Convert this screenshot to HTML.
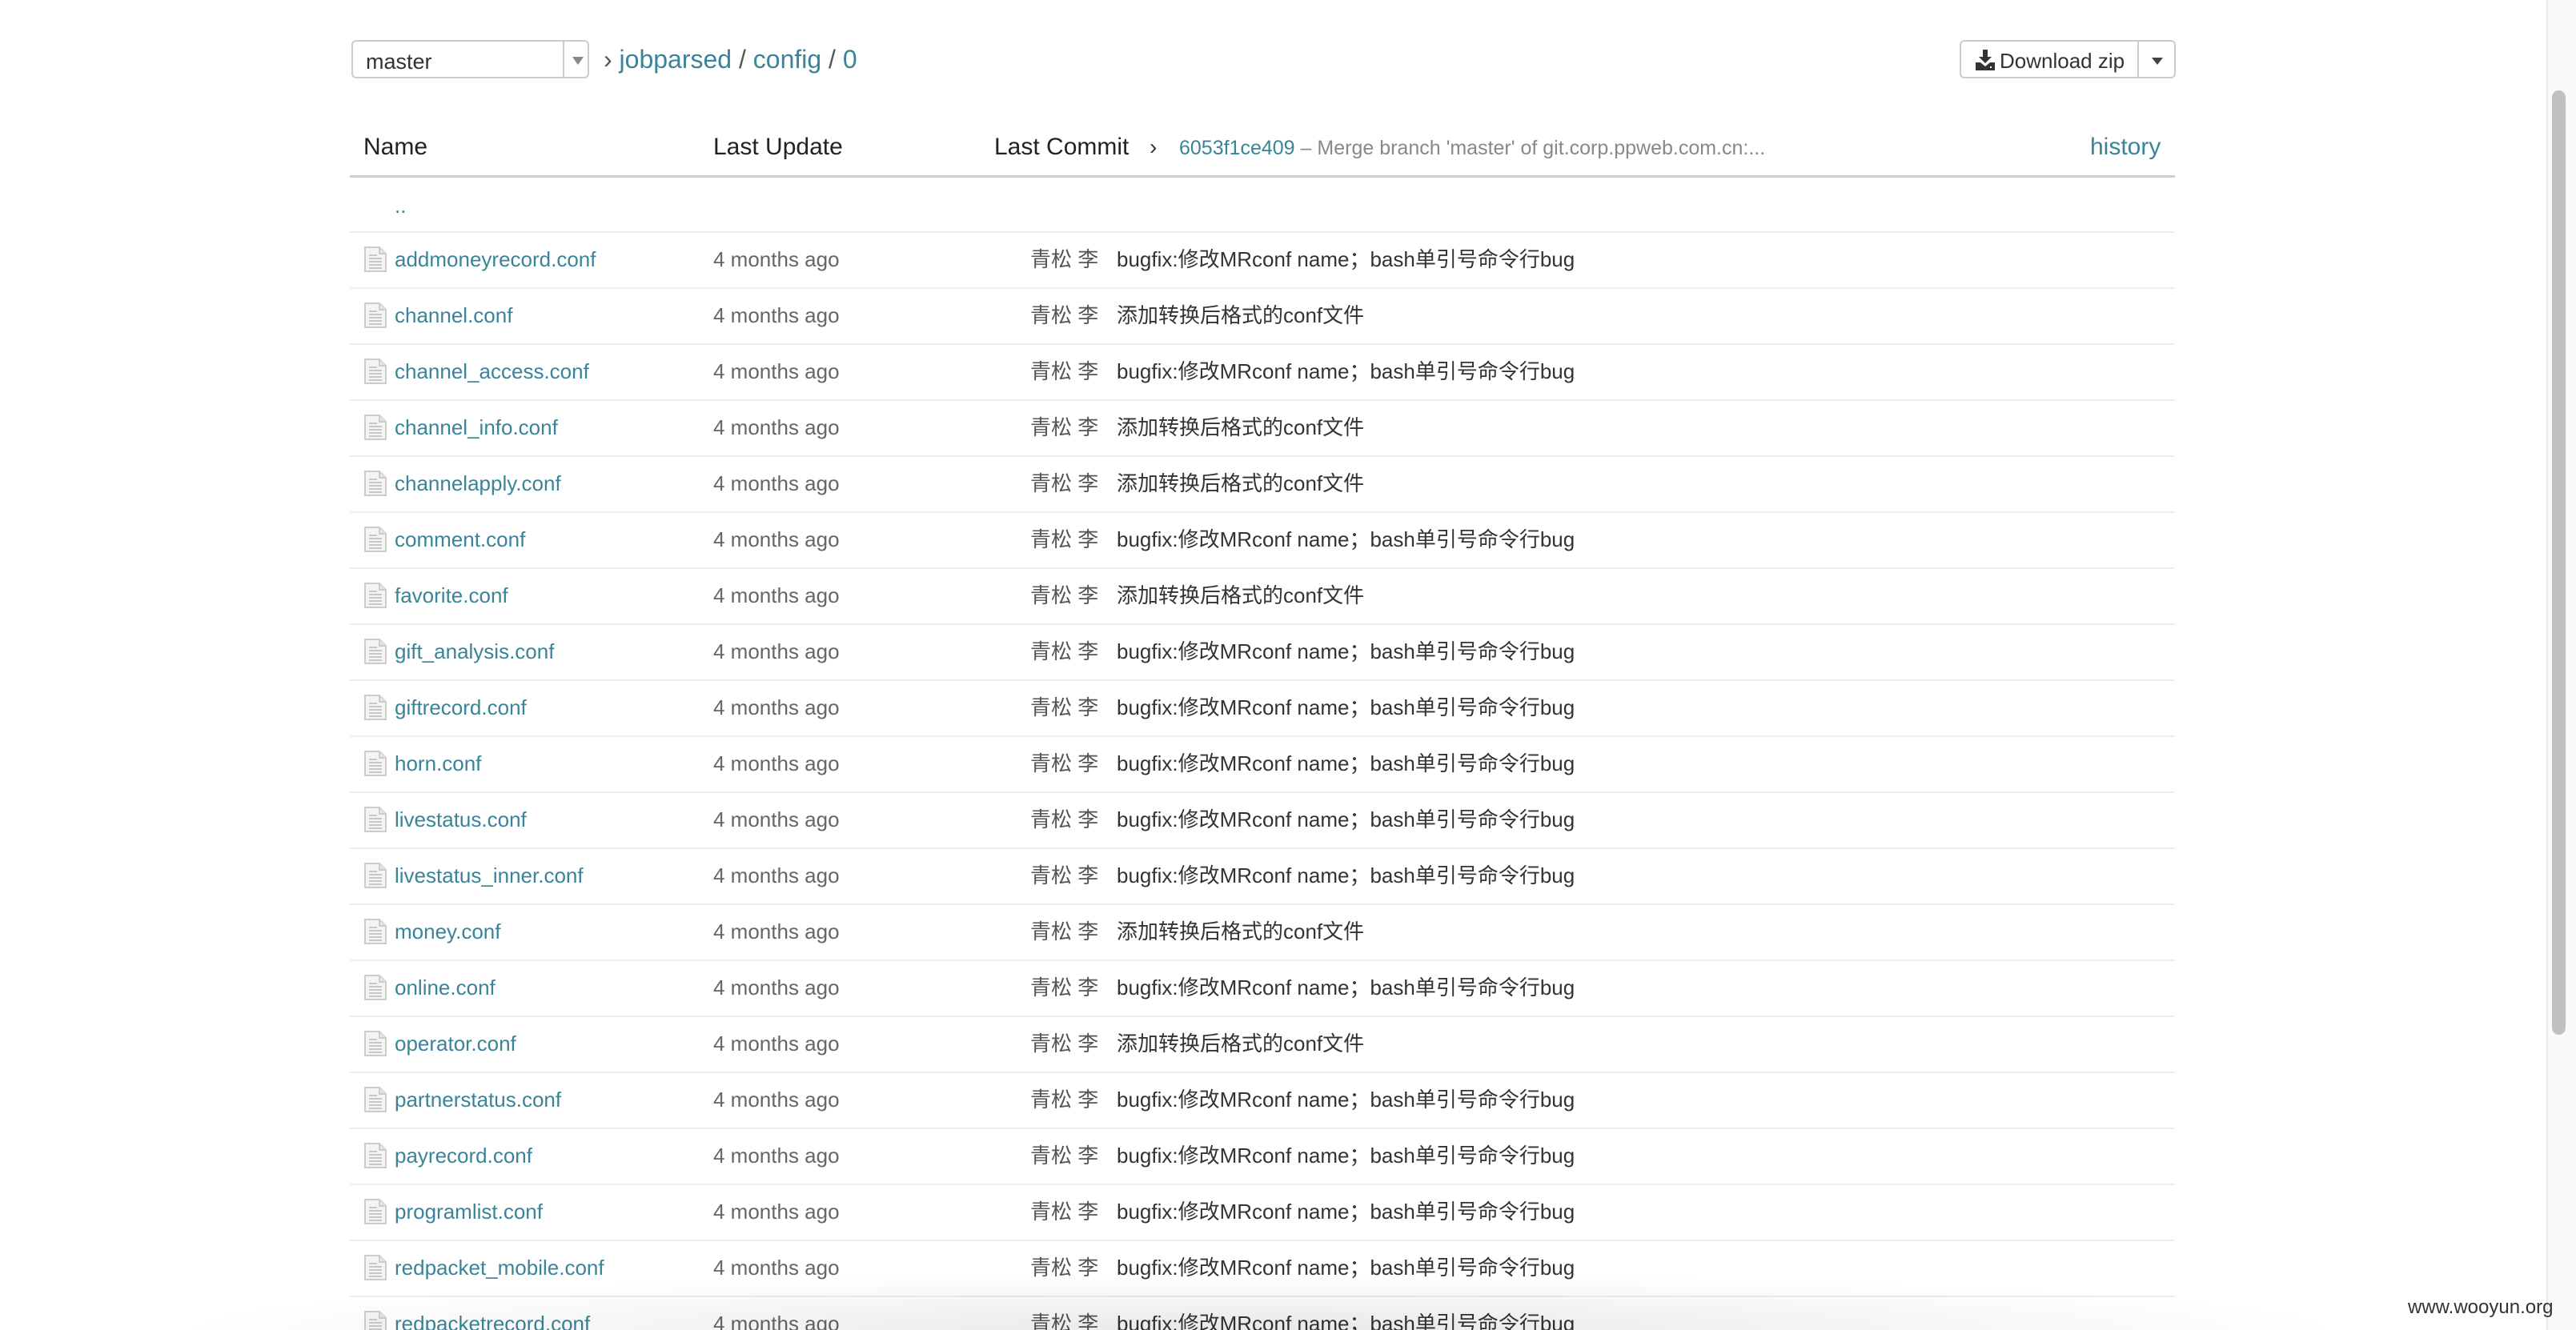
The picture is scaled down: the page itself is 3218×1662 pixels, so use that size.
<!DOCTYPE html>
<html><head><meta charset="utf-8">
<style>
html,body{margin:0;padding:0;background:#fff;width:3218px;height:1662px;overflow:hidden;position:relative;font-family:"Liberation Sans","Noto Sans CJK SC",sans-serif;}
.a{position:absolute;white-space:nowrap;}
.link{color:#3a8398;}
.sel{left:439px;top:50px;width:297px;height:48px;border:2px solid #ccc;border-radius:6px;box-sizing:border-box;}
.sel .t{position:absolute;left:16px;top:10px;font-size:27px;color:#333;}
.sel .d{position:absolute;left:262px;top:0;bottom:0;border-left:2px solid #ccc;width:33px;}
.sel .d:after{content:"";position:absolute;left:10px;top:19px;border-left:7px solid transparent;border-right:7px solid transparent;border-top:10px solid #888;}
.bc{left:754px;top:56px;font-size:32px;color:#555;}
.btn{left:2448px;top:50px;width:270px;height:48px;border:2px solid #ccc;border-radius:6px;box-sizing:border-box;}
.btn .t{position:absolute;left:48px;top:9px;font-size:26px;color:#333;}
.btn .d{position:absolute;left:220px;top:0;bottom:0;border-left:2px solid #ccc;width:48px;}
.btn .d:after{content:"";position:absolute;left:16px;top:20px;border-left:7px solid transparent;border-right:7px solid transparent;border-top:9px solid #444;}
.hd{top:167px;font-size:30px;color:#222;}
.hr{left:437px;width:2280px;height:3px;background:#ccc;top:219px;}
.rl{position:absolute;left:437px;width:2280px;height:2px;background:#eee;}
.row{position:absolute;left:0;width:3218px;height:70px;font-size:26px;}
.row span{position:absolute;top:22px;line-height:1;white-space:nowrap;}
.n{left:493px;color:#3a8398;}
.u{left:891px;color:#666;}
.au{left:1287px;color:#555;}
.m{left:1395px;color:#333;}
.ic{position:absolute;left:455px;top:19px;}
</style></head><body>
<div class="a sel"><span class="t">master</span><span class="d"></span></div>
<div class="a bc">› <span class="link">jobparsed</span> / <span class="link">config</span> / <span class="link">0</span></div>
<div class="a btn">
<svg style="position:absolute;left:18px;top:10px" width="24" height="26" viewBox="0 0 24 26"><path d="M9 0h6v9h5l-8 8-8-8h5z" fill="#333"/><path d="M0 16h6l6 5 6-5h6v10H0z" fill="#333"/><rect x="18" y="21" width="2" height="2" fill="#fff"/></svg>
<span class="t">Download zip</span><span class="d"></span></div>

<div class="a hd" style="left:454px">Name</div>
<div class="a hd" style="left:891px">Last Update</div>
<div class="a hd" style="left:1242px">Last Commit</div>
<div class="a" style="left:1436px;top:168px;font-size:28px;color:#333">›</div>
<div class="a" style="left:1473px;top:171px;font-size:25px;color:#888"><span class="link">6053f1ce409</span> – Merge branch 'master' of git.corp.ppweb.com.cn:...</div>
<div class="a link" style="left:2611px;top:167px;font-size:30px">history</div>
<div class="a hr"></div>

<div class="row" style="top:222px"><span style="left:493px;top:22px;color:#3a8398">..</span></div>
<div class="rl" style="top:289px"></div>

<div id="rows"></div>
<script>
var bug="bugfix:修改MRconf name；bash单引号命令行bug",add="添加转换后格式的conf文件";
var d=[["addmoneyrecord.conf",bug],["channel.conf",add],["channel_access.conf",bug],["channel_info.conf",add],["channelapply.conf",add],["comment.conf",bug],["favorite.conf",add],["gift_analysis.conf",bug],["giftrecord.conf",bug],["horn.conf",bug],["livestatus.conf",bug],["livestatus_inner.conf",bug],["money.conf",add],["online.conf",bug],["operator.conf",add],["partnerstatus.conf",bug],["payrecord.conf",bug],["programlist.conf",bug],["redpacket_mobile.conf",bug],["redpacketrecord.conf",bug]];
var ic='<svg class="ic" width="28" height="32" viewBox="0 0 28 32"><path d="M1 1h18l8 8v22H1z" fill="#f4f4f4" stroke="#ccc" stroke-width="2"/><path d="M19 1v8h8" fill="#e4e4e4" stroke="#ccc" stroke-width="2"/><path d="M6 11h10M6 15h16M6 19h16M6 23h16M6 27h16" stroke="#c8c8c8" stroke-width="2"/></svg>';
var h="";
for(var i=0;i<d.length;i++){var t=289+i*70;
h+='<div class="row" style="top:'+t+'px">'+ic+'<span class="n">'+d[i][0]+'</span><span class="u">4 months ago</span><span class="au">青松 李</span><span class="m">'+d[i][1]+'</span></div>';
h+='<div class="rl" style="top:'+(t+70)+'px"></div>';}
document.getElementById("rows").innerHTML=h;
</script>

<div class="a" style="left:3181px;top:0;width:37px;height:1662px;background:#fafafa;border-left:2px solid #e8e8e8;box-sizing:border-box"></div>
<div class="a" style="left:3188px;top:113px;width:17px;height:1180px;background:#c1c1c1;border-radius:9px"></div>
<div class="a" style="left:200px;top:1590px;width:2750px;height:72px;background:radial-gradient(ellipse at 50% 100%,rgba(0,0,0,0.09),rgba(0,0,0,0) 70%)"></div>
<div class="a" style="left:3008px;top:1620px;font-size:24px;color:#333">www.wooyun.org</div>
</body></html>
